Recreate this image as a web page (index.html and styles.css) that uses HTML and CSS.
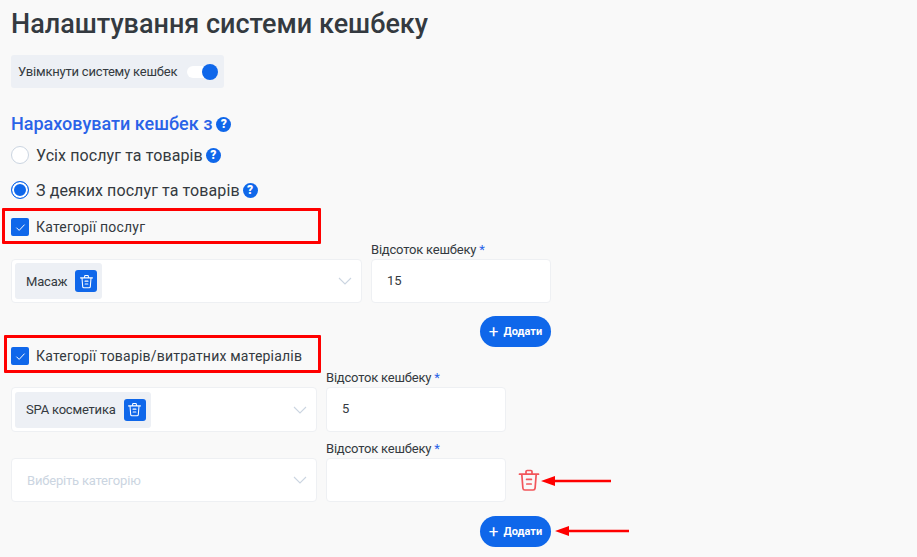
FILE: index.html
```html
<!DOCTYPE html>
<html lang="uk">
<head>
  <meta charset="UTF-8" />
  <meta name="viewport" content="width=device-width, initial-scale=1.0"/>
  <title>Налаштування системи кешбеку</title>
  <link rel="stylesheet" href="styles.css">
</head>
<body>
  <svg class="icon-defs" width="0" height="0" aria-hidden="true">
    <symbol id="trash" viewBox="0 0 24 24">
      <path d="M2.5 6.2h19M9 6V3.6c0-.7.5-1.1 1.1-1.1h3.8c.6 0 1.1.4 1.1 1.1V6M4.8 6.4l1.1 13.8c.1 1 .9 1.8 1.9 1.8h8.4c1 0 1.8-.8 1.9-1.8l1.1-13.8M9.6 11.4h4.8M9.8 16h4.4" fill="none" stroke="currentColor" stroke-width="1.7" stroke-linecap="round" stroke-linejoin="round"/>
    </symbol>
    <symbol id="chevron" viewBox="0 0 14 8">
      <path d="M1 1l6 6 6-6" fill="none" stroke="#cbd5e1" stroke-width="1.1"/>
    </symbol>
    <symbol id="check" viewBox="0 0 12 10">
      <path d="M1.5 5.2l3 3 6-6.4" fill="none" stroke="#fff" stroke-width="1.1"/>
    </symbol>
  </svg>

  <main class="page">
    <h1>Налаштування системи кешбеку</h1>

    <div class="switch-box">
      <span>Увімкнути систему кешбек</span>
      <span class="switch"><span class="switch-knob"></span></span>
    </div>

    <h2>Нараховувати кешбек з <span class="help">?</span></h2>

    <div class="radio-row">
      <span class="radio"></span>
      <span>Усіх послуг та товарів</span>
      <span class="help">?</span>
    </div>
    <div class="radio-row radio-row-second">
      <span class="radio radio-on"></span>
      <span>З деяких послуг та товарів</span>
      <span class="help">?</span>
    </div>

    <div class="check-row check-row-first">
      <span class="mark-box mark-box-first"></span>
      <span class="checkbox"><svg><use href="#check"/></svg></span>
      <span>Категорії послуг</span>
    </div>

    <div class="field-row field-row-first">
      <div class="select select-wide">
        <span class="chip">Масаж <span class="chip-del"><svg><use href="#trash"/></svg></span></span>
        <svg class="chevron"><use href="#chevron"/></svg>
      </div>
      <div class="field">
        <label>Відсоток кешбеку <span class="req">*</span></label>
        <div class="input">15</div>
      </div>
    </div>
    <div class="add-row">
      <button class="add-btn" type="button"><span class="plus">+</span> Додати</button>
    </div>

    <div class="check-row check-row-second">
      <span class="mark-box mark-box-second"></span>
      <span class="checkbox"><svg><use href="#check"/></svg></span>
      <span>Категорії товарів/витратних матеріалів</span>
    </div>

    <div class="field-row field-row-second">
      <div class="select">
        <span class="chip">SPA косметика <span class="chip-del"><svg><use href="#trash"/></svg></span></span>
        <svg class="chevron"><use href="#chevron"/></svg>
      </div>
      <div class="field">
        <label>Відсоток кешбеку <span class="req">*</span></label>
        <div class="input">5</div>
      </div>
    </div>

    <div class="field-row field-row-third">
      <div class="select">
        <span class="placeholder">Виберіть категорію</span>
        <svg class="chevron"><use href="#chevron"/></svg>
      </div>
      <div class="field">
        <label>Відсоток кешбеку <span class="req">*</span></label>
        <div class="input"></div>
      </div>
      <div class="row-del">
        <svg class="row-trash"><use href="#trash"/></svg>
        <svg class="arrow arrow-trash" viewBox="0 0 70 14"><path d="M0 7l14-5v3.8h56v2.4H14V12z" fill="#f00"/></svg>
      </div>
    </div>
    <div class="add-row">
      <button class="add-btn" type="button"><span class="plus">+</span> Додати</button>
      <svg class="arrow arrow-add" viewBox="0 0 74 14"><path d="M0 7l14-5v3.8h60v2.4H14V12z" fill="#f00"/></svg>
    </div>
  </main>
</body>
</html>
```

FILE: styles.css
```css
body {
  font-family: Roboto, Arial, sans-serif;
  margin: 0;
  padding: 0;
  background-color: #f9f9f9;
  color: #343a40;
}

.icon-defs {
  position: absolute;
}

.page {
  padding-left: 11px;
}

h1 {
  font-size: 27px;
  font-weight: 500;
  line-height: 30px;
  margin: 0;
  padding-top: 9px;
}

.switch-box {
  display: flex;
  align-items: center;
  justify-content: space-between;
  box-sizing: border-box;
  width: 213px;
  height: 33px;
  margin-top: 16px;
  padding: 0 6px 0 7px;
  background-color: #edf0f5;
  border-radius: 3px;
  font-size: 13px;
  letter-spacing: -0.2px;
}

.switch {
  display: flex;
  justify-content: flex-end;
  align-items: center;
  width: 31px;
  height: 12px;
  background-color: #fff;
  border-radius: 6px;
}

.switch-knob {
  width: 16px;
  height: 16px;
  background-color: #0f67ea;
  border-radius: 50%;
}

h2 {
  display: flex;
  align-items: center;
  gap: 4px;
  font-size: 18px;
  font-weight: 500;
  line-height: 22px;
  color: #2a63e8;
  margin: 25px 0 0;
}

.help {
  display: inline-block;
  width: 15px;
  height: 15px;
  flex: none;
  background-color: #0f67ea;
  border-radius: 50%;
  color: #fff;
  font-size: 12px;
  font-weight: 900;
  line-height: 15px;
  letter-spacing: 0;
  text-align: center;
}

.radio-row {
  display: flex;
  align-items: center;
  height: 20px;
  margin-top: 10px;
  font-size: 16px;
  letter-spacing: 0.1px;
}

.radio-row-second {
  margin-top: 15px;
}

.radio-row .help {
  margin-left: 3px;
}

.radio {
  box-sizing: border-box;
  width: 18px;
  height: 18px;
  margin-right: 7px;
  background-color: #fff;
  border: 1px solid #cbd5e1;
  border-radius: 50%;
}

.radio-on {
  background-color: #0f67ea;
  border: 1.5px solid #0f67ea;
  box-shadow: inset 0 0 0 2px #fff;
}

.check-row {
  position: relative;
  display: flex;
  align-items: center;
  height: 18px;
  font-size: 14px;
  letter-spacing: 0.2px;
}

.check-row-first {
  margin-top: 18px;
}

.mark-box {
  position: absolute;
  box-sizing: border-box;
  border: 3px solid #f00;
  border-radius: 1px;
}

.mark-box-first {
  top: -10px;
  left: -9px;
  width: 319px;
  height: 36px;
}

.mark-box-second {
  top: -12px;
  left: -7px;
  width: 317px;
  height: 38px;
}

.checkbox {
  display: flex;
  align-items: center;
  justify-content: center;
  width: 18px;
  height: 18px;
  margin-right: 7px;
  background-color: #0f67ea;
  border-radius: 2px;
}

.checkbox svg {
  width: 11px;
  height: 9px;
}

.field-row {
  display: flex;
  align-items: flex-end;
  gap: 9px;
}

.field-row-first {
  margin-top: 6px;
}

.field-row-second {
  margin-top: 5px;
}

.field-row-second .select,
.field-row-second .input {
  height: 45px;
}

.field-row-third {
  margin-top: 9px;
  margin-bottom: 14px;
}

.select {
  display: flex;
  align-items: center;
  justify-content: space-between;
  box-sizing: border-box;
  width: 306px;
  height: 44px;
  padding: 0 9px 0 3px;
  background-color: #fff;
  border: 1px solid #eef0f3;
  border-radius: 4px;
  font-size: 13px;
  letter-spacing: -0.2px;
}

.select-wide {
  width: 351px;
}

.chip {
  display: flex;
  align-items: center;
  gap: 8px;
  height: 36px;
  padding: 0 5px 0 11px;
  background-color: #edf0f5;
  border-radius: 3px;
}

.chip-del {
  display: flex;
  align-items: center;
  justify-content: center;
  width: 22px;
  height: 22px;
  background-color: #0f67ea;
  border-radius: 3px;
  color: #fff;
}

.chip-del svg {
  width: 15px;
  height: 15px;
}

.chevron {
  width: 14px;
  height: 8px;
}

.placeholder {
  padding-left: 12px;
  color: #cbd5e1;
}

.field label {
  display: block;
  font-size: 13px;
  line-height: 15px;
  margin-bottom: 2px;
  letter-spacing: -0.2px;
}

.req {
  color: #2a63e8;
}

.input {
  box-sizing: border-box;
  width: 180px;
  height: 44px;
  padding-left: 15px;
  line-height: 42px;
  background-color: #fff;
  border: 1px solid #eef0f3;
  border-radius: 4px;
  font-size: 13px;
}

.row-del {
  position: relative;
  height: 34px;
  margin-left: 2px;
}

.row-trash {
  display: block;
  width: 24px;
  height: 24px;
  color: #f2555a;
}

.add-row {
  position: relative;
  display: flex;
  justify-content: flex-end;
  width: 540px;
  margin-top: 13px;
}

.add-btn {
  display: flex;
  align-items: center;
  justify-content: center;
  gap: 5px;
  width: 71px;
  height: 31px;
  padding: 0;
  background-color: #0f67ea;
  border: none;
  border-radius: 16px;
  color: #fff;
  font-family: Roboto, Arial, sans-serif;
  font-size: 11px;
  font-weight: 700;
}

.plus {
  font-size: 17px;
  font-weight: 400;
  line-height: 17px;
}

.arrow {
  position: absolute;
  height: 14px;
}

.arrow-trash {
  left: 24px;
  top: 6px;
  width: 70px;
}

.arrow-add {
  left: 544px;
  top: 8px;
  width: 74px;
}
```
